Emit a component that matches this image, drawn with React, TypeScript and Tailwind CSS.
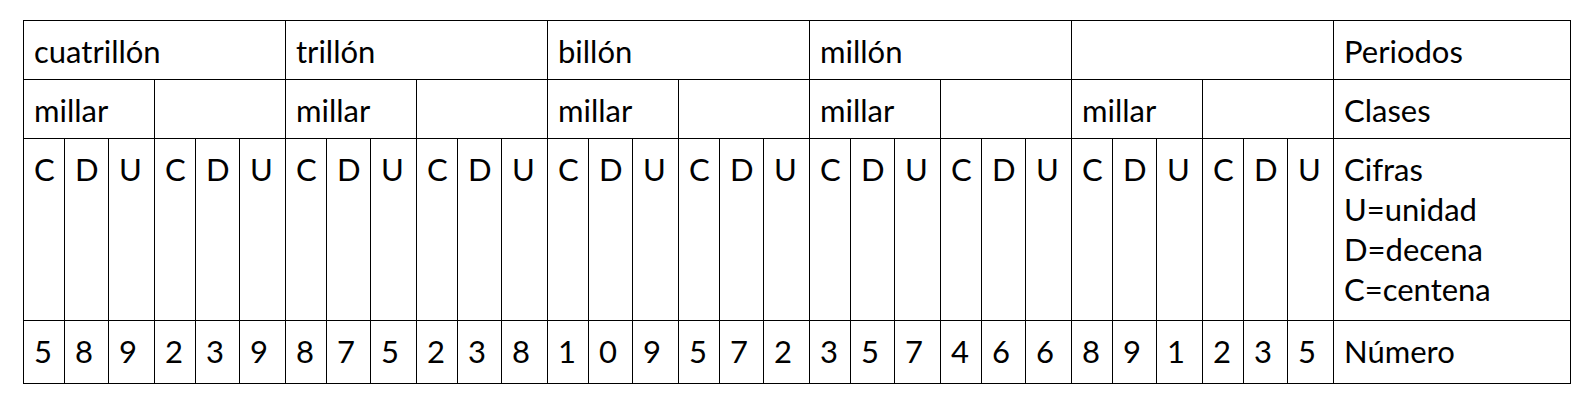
import React from "react";

const periods = ["cuatrillón", "trillón", "billón", "millón", ""];
const digits = "589239875238109572357466891235".split("");
const cdu = ["C", "D", "U", "C", "D", "U"];

const font = { fontFamily: "Lato, 'Open Sans', sans-serif" };

export default function App() {
  const cell = "bg-white pl-[10px] pt-[10px] text-[31px] leading-[40px] text-black";
  return (
    <div className="w-[1595px] h-[404px] bg-white pt-[20px] pl-[23px]" style={font}>
      <div
        className="grid w-[1548px] gap-px bg-black p-px"
        style={{
          gridTemplateColumns:
            "repeat(5, 40px 43px 45px 40px 43px 45px) 236px",
          gridTemplateRows: "58px 58px 181px 62px",
        }}
      >
        {periods.map((p, i) => (
          <div key={"p" + i} className={`${cell} col-span-6`}>
            {p}
          </div>
        ))}
        <div className={cell}>Periodos</div>

        {periods.map((_, i) => (
          <React.Fragment key={"m" + i}>
            <div className={`${cell} col-span-3`}>millar</div>
            <div className={`${cell} col-span-3`}></div>
          </React.Fragment>
        ))}
        <div className={cell}>Clases</div>

        {periods.map((_, i) =>
          cdu.map((c, j) => (
            <div key={"c" + i + j} className={cell}>
              {c}
            </div>
          ))
        )}
        <div className={`${cell} leading-[40.67px]`}>
          <div>Cifras</div>
          <div>U=unidad</div>
          <div>D=decena</div>
          <div>C=centena</div>
        </div>

        {digits.map((d, i) => (
          <div key={"d" + i} className={cell}>
            {d}
          </div>
        ))}
        <div className={cell}>Número</div>
      </div>
    </div>
  );
}
